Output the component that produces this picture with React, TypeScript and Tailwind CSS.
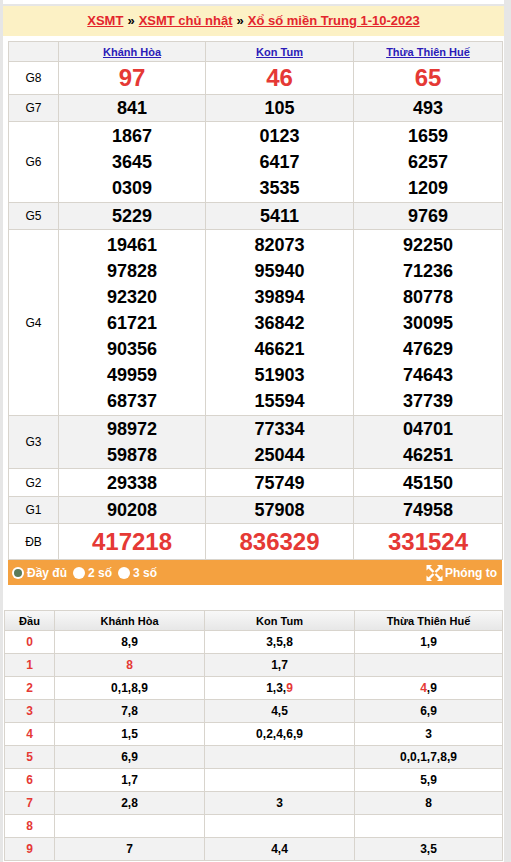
import React from 'react';

const provinces = ['Khánh Hòa', 'Kon Tum', 'Thừa Thiên Huế'];

interface Prize {
  label: string;
  values: string[][];
  kind: 'red' | 'black';
  rowClass: string;
}

const prizes: Prize[] = [
  { label: 'G8', values: [['97'], ['46'], ['65']], kind: 'red', rowClass: 'h-[33px] bg-white' },
  { label: 'G7', values: [['841'], ['105'], ['493']], kind: 'black', rowClass: 'h-[27px] bg-[#f2f2f2]' },
  {
    label: 'G6',
    values: [
      ['1867', '3645', '0309'],
      ['0123', '6417', '3535'],
      ['1659', '6257', '1209'],
    ],
    kind: 'black',
    rowClass: 'h-[81px] bg-white',
  },
  { label: 'G5', values: [['5229'], ['5411'], ['9769']], kind: 'black', rowClass: 'h-[27px] bg-[#f2f2f2]' },
  {
    label: 'G4',
    values: [
      ['19461', '97828', '92320', '61721', '90356', '49959', '68737'],
      ['82073', '95940', '39894', '36842', '46621', '51903', '15594'],
      ['92250', '71236', '80778', '30095', '47629', '74643', '37739'],
    ],
    kind: 'black',
    rowClass: 'h-[186px] bg-white',
  },
  {
    label: 'G3',
    values: [
      ['98972', '59878'],
      ['77334', '25044'],
      ['04701', '46251'],
    ],
    kind: 'black',
    rowClass: 'h-[53px] bg-[#f2f2f2]',
  },
  { label: 'G2', values: [['29338'], ['75749'], ['45150']], kind: 'black', rowClass: 'h-[28px] bg-white' },
  { label: 'G1', values: [['90208'], ['57908'], ['74958']], kind: 'black', rowClass: 'h-[27px] bg-[#f2f2f2]' },
  { label: 'ĐB', values: [['417218'], ['836329'], ['331524']], kind: 'red', rowClass: 'h-[36px] bg-white' },
];

// '*' marks a digit that matches the special prize
const loto: string[][] = [
  ['8,9', '3,5,8', '1,9'],
  ['*8', '1,7', ''],
  ['0,1,8,9', '1,3,*9', '*4,9'],
  ['7,8', '4,5', '6,9'],
  ['1,5', '0,2,4,6,9', '3'],
  ['6,9', '', '0,0,1,7,8,9'],
  ['1,7', '', '5,9'],
  ['2,8', '3', '8'],
  ['', '', ''],
  ['7', '4,4', '3,5'],
];

function LotoCell({ text }: { text: string }) {
  if (!text) return null;
  const parts = text.split(',');
  return (
    <>
      {parts.map((p, i) => (
        <React.Fragment key={i}>
          {i > 0 && ','}
          {p.startsWith('*') ? <span className="text-[#e53935]">{p.slice(1)}</span> : p}
        </React.Fragment>
      ))}
    </>
  );
}

function ExpandIcon() {
  return (
    <svg width="17" height="16" viewBox="0 0 16 16" fill="white">
      <polygon points="0,0 5.5,0 0,5.5" />
      <polygon points="16,0 10.5,0 16,5.5" />
      <polygon points="0,16 5.5,16 0,10.5" />
      <polygon points="16,16 10.5,16 16,10.5" />
      <g stroke="white" strokeWidth="2.4">
        <line x1="2" y1="2" x2="7" y2="7" />
        <line x1="14" y1="2" x2="9" y2="7" />
        <line x1="2" y1="14" x2="7" y2="9" />
        <line x1="14" y1="14" x2="9" y2="9" />
      </g>
    </svg>
  );
}

function Radio({ label, checked }: { label: string; checked?: boolean }) {
  return (
    <label className="flex items-center gap-[3px] mr-[6px] text-white text-[12px] font-bold">
      <span className="w-[12px] h-[12px] rounded-full bg-white flex items-center justify-center">
        {checked && <span className="w-[8px] h-[8px] rounded-full bg-[#5b7b59]" />}
      </span>
      {label}
    </label>
  );
}

const cell = 'border border-[#d8d4cd] p-0';

export default function App() {
  return (
    <div className="min-h-[862px] bg-[#e6e6e6] font-['Liberation_Sans',Arial,sans-serif] text-black">
      <div className="ml-[3px] w-[501px] h-[4px] bg-white" />
      <div className="ml-[3px] w-[501px] mt-[2px] bg-white pb-[2px]">
        {/* Title */}
        <div className="h-[30px] bg-[#fcf1c5] flex items-center justify-center text-[13px] font-bold">
          <a href="#" className="text-[#e3262d] underline">XSMT</a>
          <span className="mx-[4px]">»</span>
          <a href="#" className="text-[#e3262d] underline">XSMT chủ nhật</a>
          <span className="mx-[4px]">»</span>
          <a href="#" className="text-[#e3262d] underline">Xổ số miền Trung 1-10-2023</a>
        </div>

        {/* Results */}
        <div className="mt-[5px] ml-[5px] w-[494px]">
          <table className="w-full table-fixed border-collapse">
            <colgroup>
              <col className="w-[50px]" />
              <col className="w-[147px]" />
              <col className="w-[148px]" />
              <col className="w-[149px]" />
            </colgroup>
            <thead>
              <tr className="h-[20px] bg-[#f2f2f2]">
                <th className={cell} />
                {provinces.map((p) => (
                  <th key={p} className={`${cell} text-[11px] font-bold leading-[14px]`}>
                    <a href="#" className="text-[#2b1bb8] underline">{p}</a>
                  </th>
                ))}
              </tr>
            </thead>
            <tbody>
              {prizes.map((prize) => (
                <tr key={prize.label} className={prize.rowClass}>
                  <td className={`${cell} text-center text-[12px] leading-[14px]`}>{prize.label}</td>
                  {prize.values.map((col, ci) => (
                    <td key={ci} className={`${cell} text-center align-middle`}>
                      {col.map((n) => (
                        <div
                          key={n}
                          className={
                            prize.kind === 'red'
                              ? 'text-[24px] font-bold leading-[26px] text-[#e53935]'
                              : 'text-[18px] font-bold leading-[26px]'
                          }
                        >
                          {n}
                        </div>
                      ))}
                    </td>
                  ))}
                </tr>
              ))}
            </tbody>
          </table>

          {/* Options bar */}
          <div className="h-[25px] bg-[#f4a140] flex items-center justify-between pl-[4px] pr-[5px]">
            <div className="flex items-center">
              <Radio label="Đầy đủ" checked />
              <Radio label="2 số" />
              <Radio label="3 số" />
            </div>
            <div className="flex items-center gap-[2px] text-white text-[12px] font-bold">
              <ExpandIcon />
              Phóng to
            </div>
          </div>
        </div>

        {/* Loto table */}
        <div className="mt-[25px] ml-[1px] w-[498px]">
          <table className="w-full table-fixed border-collapse">
            <colgroup>
              <col className="w-[50px]" />
              <col className="w-[150px]" />
              <col className="w-[150px]" />
              <col className="w-[148px]" />
            </colgroup>
            <thead>
              <tr className="h-[20px] bg-gradient-to-b from-[#f8f8f8] to-[#e6e6e6]">
                <th className={`${cell} text-[11px] font-bold leading-[14px]`}>Đầu</th>
                {provinces.map((p) => (
                  <th key={p} className={`${cell} text-[11px] font-bold leading-[14px]`}>{p}</th>
                ))}
              </tr>
            </thead>
            <tbody>
              {loto.map((row, i) => (
                <tr key={i} className={i % 2 === 0 ? 'h-[23px] bg-white' : 'h-[23px] bg-[#f2f2f2]'}>
                  <td className={`${cell} text-center text-[12px] font-bold leading-[14px] text-[#e53935]`}>{i}</td>
                  {row.map((v, ci) => (
                    <td key={ci} className={`${cell} text-center text-[12px] font-bold leading-[14px]`}>
                      <LotoCell text={v} />
                    </td>
                  ))}
                </tr>
              ))}
            </tbody>
          </table>
        </div>
      </div>
    </div>
  );
}
